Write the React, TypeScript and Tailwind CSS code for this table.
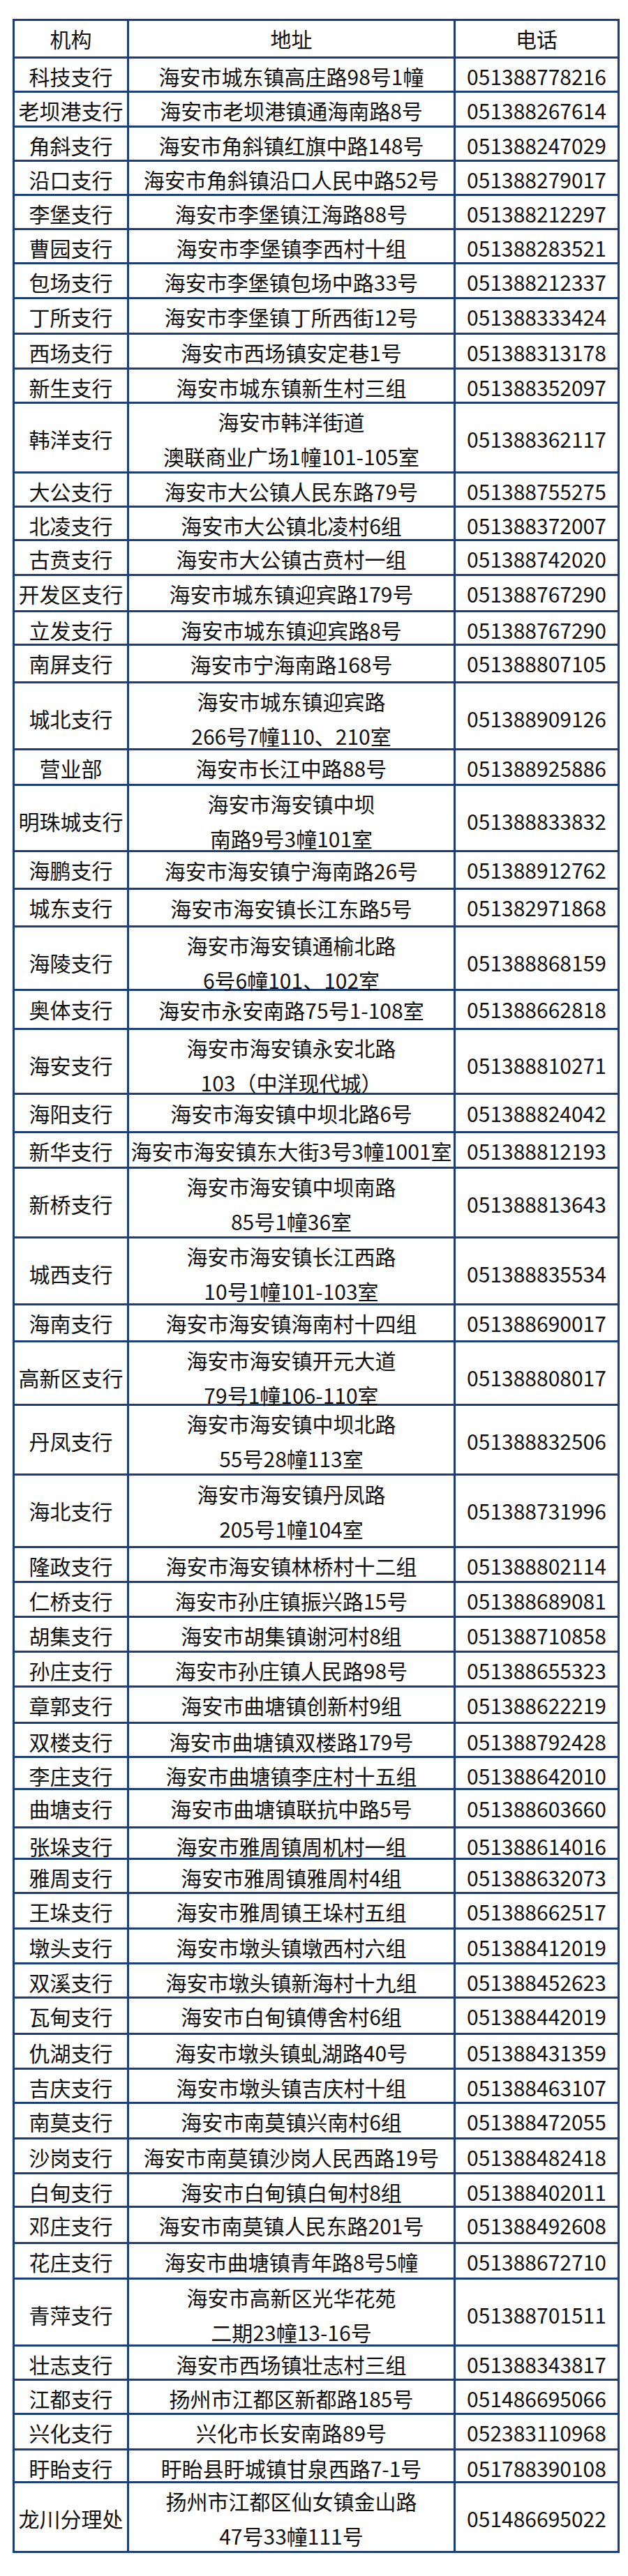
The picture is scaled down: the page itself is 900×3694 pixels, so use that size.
const rows: { name: string; addr: string[]; phone: string; h: string }[] = [
  { name: '科技支行', addr: ['海安市城东镇高庄路98号1幢'], phone: '051388778216', h: 'h-[49px]' },
  { name: '老坝港支行', addr: ['海安市老坝港镇通海南路8号'], phone: '051388267614', h: 'h-[50px]' },
  { name: '角斜支行', addr: ['海安市角斜镇红旗中路148号'], phone: '051388247029', h: 'h-[49px]' },
  { name: '沿口支行', addr: ['海安市角斜镇沿口人民中路52号'], phone: '051388279017', h: 'h-[49px]' },
  { name: '李堡支行', addr: ['海安市李堡镇江海路88号'], phone: '051388212297', h: 'h-[49px]' },
  { name: '曹园支行', addr: ['海安市李堡镇李西村十组'], phone: '051388283521', h: 'h-[49px]' },
  { name: '包场支行', addr: ['海安市李堡镇包场中路33号'], phone: '051388212337', h: 'h-[50px]' },
  { name: '丁所支行', addr: ['海安市李堡镇丁所西街12号'], phone: '051388333424', h: 'h-[51px]' },
  { name: '西场支行', addr: ['海安市西场镇安定巷1号'], phone: '051388313178', h: 'h-[50px]' },
  { name: '新生支行', addr: ['海安市城东镇新生村三组'], phone: '051388352097', h: 'h-[49px]' },
  { name: '韩洋支行', addr: ['海安市韩洋街道', '澳联商业广场1幢101-105室'], phone: '051388362117', h: 'h-[100px]' },
  { name: '大公支行', addr: ['海安市大公镇人民东路79号'], phone: '051388755275', h: 'h-[49px]' },
  { name: '北凌支行', addr: ['海安市大公镇北凌村6组'], phone: '051388372007', h: 'h-[48px]' },
  { name: '古贲支行', addr: ['海安市大公镇古贲村一组'], phone: '051388742020', h: 'h-[50px]' },
  { name: '开发区支行', addr: ['海安市城东镇迎宾路179号'], phone: '051388767290', h: 'h-[52px]' },
  { name: '立发支行', addr: ['海安市城东镇迎宾路8号'], phone: '051388767290', h: 'h-[48px]' },
  { name: '南屏支行', addr: ['海安市宁海南路168号'], phone: '051388807105', h: 'h-[54px]' },
  { name: '城北支行', addr: ['海安市城东镇迎宾路', '266号7幢110、210室'], phone: '051388909126', h: 'h-[96px]' },
  { name: '营业部', addr: ['海安市长江中路88号'], phone: '051388925886', h: 'h-[51px]' },
  { name: '明珠城支行', addr: ['海安市海安镇中坝', '南路9号3幢101室'], phone: '051388833832', h: 'h-[95px]' },
  { name: '海鹏支行', addr: ['海安市海安镇宁海南路26号'], phone: '051388912762', h: 'h-[54px]' },
  { name: '城东支行', addr: ['海安市海安镇长江东路5号'], phone: '051382971868', h: 'h-[54px]' },
  { name: '海陵支行', addr: ['海安市海安镇通榆北路', '6号6幢101、102室'], phone: '051388868159', h: 'h-[91px]' },
  { name: '奥体支行', addr: ['海安市永安南路75号1-108室'], phone: '051388662818', h: 'h-[56px]' },
  { name: '海安支行', addr: ['海安市海安镇永安北路', '103（中洋现代城）'], phone: '051388810271', h: 'h-[93px]' },
  { name: '海阳支行', addr: ['海安市海安镇中坝北路6号'], phone: '051388824042', h: 'h-[55px]' },
  { name: '新华支行', addr: ['海安市海安镇东大街3号3幢1001室'], phone: '051388812193', h: 'h-[51px]' },
  { name: '新桥支行', addr: ['海安市海安镇中坝南路', '85号1幢36室'], phone: '051388813643', h: 'h-[100px]' },
  { name: '城西支行', addr: ['海安市海安镇长江西路', '10号1幢101-103室'], phone: '051388835534', h: 'h-[96px]' },
  { name: '海南支行', addr: ['海安市海安镇海南村十四组'], phone: '051388690017', h: 'h-[53px]' },
  { name: '高新区支行', addr: ['海安市海安镇开元大道', '79号1幢106-110室'], phone: '051388808017', h: 'h-[91px]' },
  { name: '丹凤支行', addr: ['海安市海安镇中坝北路', '55号28幢113室'], phone: '051388832506', h: 'h-[100px]' },
  { name: '海北支行', addr: ['海安市海安镇丹凤路', '205号1幢104室'], phone: '051388731996', h: 'h-[104px]' },
  { name: '隆政支行', addr: ['海安市海安镇林桥村十二组'], phone: '051388802114', h: 'h-[50px]' },
  { name: '仁桥支行', addr: ['海安市孙庄镇振兴路15号'], phone: '051388689081', h: 'h-[50px]' },
  { name: '胡集支行', addr: ['海安市胡集镇谢河村8组'], phone: '051388710858', h: 'h-[50px]' },
  { name: '孙庄支行', addr: ['海安市孙庄镇人民路98号'], phone: '051388655323', h: 'h-[50px]' },
  { name: '章郭支行', addr: ['海安市曲塘镇创新村9组'], phone: '051388622219', h: 'h-[52px]' },
  { name: '双楼支行', addr: ['海安市曲塘镇双楼路179号'], phone: '051388792428', h: 'h-[49px]' },
  { name: '李庄支行', addr: ['海安市曲塘镇李庄村十五组'], phone: '051388642010', h: 'h-[46px]' },
  { name: '曲塘支行', addr: ['海安市曲塘镇联抗中路5号'], phone: '051388603660', h: 'h-[55px]' },
  { name: '张垛支行', addr: ['海安市雅周镇周机村一组'], phone: '051388614016', h: 'h-[45px]' },
  { name: '雅周支行', addr: ['海安市雅周镇雅周村4组'], phone: '051388632073', h: 'h-[49px]' },
  { name: '王垛支行', addr: ['海安市雅周镇王垛村五组'], phone: '051388662517', h: 'h-[51px]' },
  { name: '墩头支行', addr: ['海安市墩头镇墩西村六组'], phone: '051388412019', h: 'h-[50px]' },
  { name: '双溪支行', addr: ['海安市墩头镇新海村十九组'], phone: '051388452623', h: 'h-[49px]' },
  { name: '瓦甸支行', addr: ['海安市白甸镇傅舍村6组'], phone: '051388442019', h: 'h-[52px]' },
  { name: '仇湖支行', addr: ['海安市墩头镇虬湖路40号'], phone: '051388431359', h: 'h-[50px]' },
  { name: '吉庆支行', addr: ['海安市墩头镇吉庆村十组'], phone: '051388463107', h: 'h-[49px]' },
  { name: '南莫支行', addr: ['海安市南莫镇兴南村6组'], phone: '051388472055', h: 'h-[51px]' },
  { name: '沙岗支行', addr: ['海安市南莫镇沙岗人民西路19号'], phone: '051388482418', h: 'h-[50px]' },
  { name: '白甸支行', addr: ['海安市白甸镇白甸村8组'], phone: '051388402011', h: 'h-[48px]' },
  { name: '邓庄支行', addr: ['海安市南莫镇人民东路201号'], phone: '051388492608', h: 'h-[52px]' },
  { name: '花庄支行', addr: ['海安市曲塘镇青年路8号5幢'], phone: '051388672710', h: 'h-[51px]' },
  { name: '青萍支行', addr: ['海安市高新区光华花苑', '二期23幢13-16号'], phone: '051388701511', h: 'h-[96px]' },
  { name: '壮志支行', addr: ['海安市西场镇壮志村三组'], phone: '051388343817', h: 'h-[49px]' },
  { name: '江都支行', addr: ['扬州市江都区新都路185号'], phone: '051486695066', h: 'h-[49px]' },
  { name: '兴化支行', addr: ['兴化市长安南路89号'], phone: '052383110968', h: 'h-[51px]' },
  { name: '盱眙支行', addr: ['盱眙县盱城镇甘泉西路7-1号'], phone: '051788390108', h: 'h-[47px]' },
  { name: '龙川分理处', addr: ['扬州市江都区仙女镇金山路', '47号33幢111号'], phone: '051486695022', h: 'h-[100px]' },
]

const cell = 'flex items-center justify-center text-center whitespace-nowrap'

export default function App() {
  return (
    <div className="min-h-screen bg-white pt-[27px] pb-[33px] font-['Noto_Sans_CJK_SC','Noto_Sans',sans-serif] text-[30px] text-[#111]">
      <div className="ml-[18px] w-[870px] border-[3px] border-[#1c3f7a]">
        {/* Header */}
        <div className="grid h-[51px] grid-cols-[161px_468px_1fr]">
          <div className={cell}>机构</div>
          <div className={`${cell} border-l-[3px] border-[#1c3f7a]`}>地址</div>
          <div className={`${cell} border-l-[3px] border-[#1c3f7a]`}>电话</div>
        </div>

        {rows.map((r, i) => (
          <div key={i} className={`grid grid-cols-[161px_468px_1fr] border-t-[3px] border-[#1c3f7a] ${r.h}`}>
            <div className={cell}>{r.name}</div>
            <div className={`${cell} flex-col border-l-[3px] border-[#1c3f7a] leading-[50px]`}>
              {r.addr.map((line, j) => (
                <span key={j}>{line}</span>
              ))}
            </div>
            <div className={`${cell} border-l-[3px] border-[#1c3f7a]`}>{r.phone}</div>
          </div>
        ))}
      </div>
    </div>
  )
}
